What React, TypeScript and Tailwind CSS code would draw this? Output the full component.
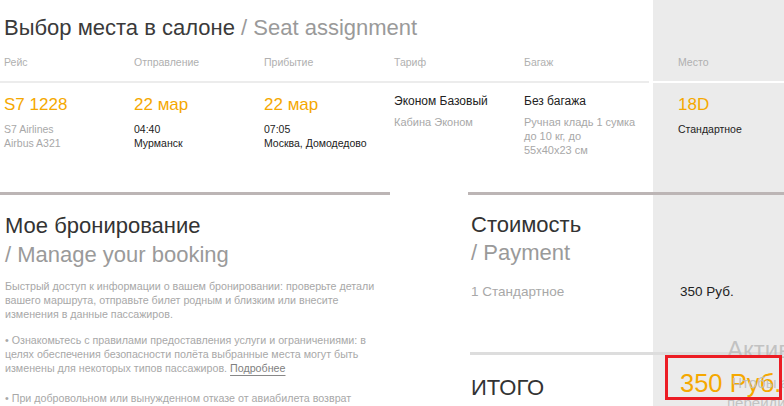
import React from "react";

const font = { fontFamily: '"Liberation Sans", Arial, sans-serif' };

export default function App() {
  return (
    <div
      className="relative w-[784px] h-[406px] overflow-hidden bg-[linear-gradient(to_right,#ffffff_653px,#ebebeb_653px)] text-[#333]"
      style={font}
    >
      {/* Header */}
      <div className="pl-[4px] pt-[14px] h-[50px] text-[22px] leading-[28px] whitespace-nowrap">
        <span className="text-[#3a3a3a]">Выбор места в салоне</span>
        <span className="text-[#9a9a9a]"> / Seat assignment</span>
      </div>

      {/* Flight table */}
      <div className="h-[107px]">
        <div className="grid grid-cols-[134px_130px_130px_130px_125px_1fr] grid-rows-[31px_2px_auto]">
          <div className="pl-[4px] text-[10.5px] leading-[12px] text-[#b0b0b0] pt-[6px]">Рейс</div>
          <div className="text-[10.5px] leading-[12px] text-[#b0b0b0] pt-[6px]">Отправление</div>
          <div className="text-[10.5px] leading-[12px] text-[#b0b0b0] pt-[6px]">Прибытие</div>
          <div className="text-[10.5px] leading-[12px] text-[#b0b0b0] pt-[6px]">Тариф</div>
          <div className="text-[10.5px] leading-[12px] text-[#b0b0b0] pt-[6px]">Багаж</div>
          <div className="pl-[29px] text-[10.5px] leading-[12px] text-[#b0b0b0] pt-[6px]">Место</div>

          <div className="col-span-5 h-[2px] bg-[#ececec]" />
          <div className="h-[2px] bg-white" />

          <div className="pl-[4px] pt-[12px]">
            <div className="text-[17px] leading-[20px] text-[#f5a800]">S7 1228</div>
            <div className="mt-[7px] text-[10.5px] leading-[14px] text-[#a8a8a8]">S7 Airlines</div>
            <div className="text-[10.5px] leading-[14px] text-[#a8a8a8]">Airbus A321</div>
          </div>
          <div className="pt-[12px]">
            <div className="text-[17px] leading-[20px] text-[#f5a800]">22 мар</div>
            <div className="mt-[7px] text-[10.5px] leading-[14px] text-[#222]">04:40</div>
            <div className="text-[10.5px] leading-[14px] text-[#222]">Мурманск</div>
          </div>
          <div className="pt-[12px]">
            <div className="text-[17px] leading-[20px] text-[#f5a800]">22 мар</div>
            <div className="mt-[7px] text-[10.5px] leading-[14px] text-[#222]">07:05</div>
            <div className="text-[10.5px] leading-[14px] text-[#222] whitespace-nowrap">Москва, Домодедово</div>
          </div>
          <div className="pt-[11px]">
            <div className="text-[12px] leading-[15px] text-[#222] whitespace-nowrap">Эконом Базовый</div>
            <div className="mt-[6px] text-[11px] leading-[14px] text-[#a8a8a8]">Кабина Эконом</div>
          </div>
          <div className="pt-[11px]">
            <div className="text-[12px] leading-[15px] text-[#222]">Без багажа</div>
            <div className="mt-[6px] text-[11px] leading-[14px] text-[#a8a8a8] whitespace-nowrap">
              <div>Ручная кладь 1 сумка</div>
              <div>до 10 кг, до</div>
              <div>55x40x23 см</div>
            </div>
          </div>
          <div className="pl-[29px] pt-[12px]">
            <div className="text-[17px] leading-[20px] text-[#f5a800]">18D</div>
            <div className="mt-[7px] text-[10.5px] leading-[14px] text-[#222]">Стандартное</div>
          </div>
        </div>
      </div>

      {/* Lower sections */}
      <div className="mt-[35px] flex">
        <div className="w-[390px]">
          <div className="h-[3px] bg-[#bcb5b5]" />
          <div className="pl-[5px] pt-[16px]">
            <div className="text-[22px] leading-[29px] text-[#333] whitespace-nowrap">Мое бронирование</div>
            <div className="text-[22px] leading-[29px] text-[#9a9a9a] whitespace-nowrap">/ Manage your booking</div>
            <div className="mt-[10px] text-[10.7px] leading-[14px] text-[#a8a8a8] whitespace-nowrap">
              Быстрый доступ к информации о вашем бронировании: проверьте детали
              <br />
              вашего маршрута, отправьте билет родным и близким или внесите
              <br />
              изменения в данные пассажиров.
            </div>
            <div className="mt-[12px] text-[10.7px] leading-[14px] text-[#a8a8a8] whitespace-nowrap">
              • Ознакомьтесь с правилами предоставления услуги и ограничениями: в
              <br />
              целях обеспечения безопасности полёта выбранные места могут быть
              <br />
              изменены для некоторых типов пассажиров.{" "}
              <span className="text-[#808080] underline underline-offset-[3px] decoration-[#888]">Подробнее</span>
            </div>
            <div className="mt-[16px] text-[10.7px] leading-[14px] text-[#a8a8a8] whitespace-nowrap">
              • При добровольном или вынужденном отказе от авиабилета возврат
            </div>
          </div>
        </div>

        <div className="ml-[78px] flex-1">
          <div className="h-[3px] bg-[#bcb5b5]" />
          <div className="pl-[3px] pt-[16px]">
            <div className="text-[22px] leading-[28px] text-[#333] whitespace-nowrap">Стоимость</div>
            <div className="text-[22px] leading-[28px] text-[#9a9a9a] whitespace-nowrap">/ Payment</div>
            <div className="mt-[17px] flex text-[13.5px] leading-[16px]">
              <div className="w-[209px] text-[#a8a8a8]">1 Стандартное</div>
              <div className="text-[#222]">350 Руб.</div>
            </div>
          </div>
          <div className="mt-[52px] ml-[2px] h-[3px] bg-[#dddddd]" />
          <div className="flex items-start pl-[3px]">
            <div className="w-[209px] pt-[19px] text-[22px] leading-[28px] text-[#333]">ИТОГО</div>
            <div className="pt-[13px] text-[25.5px] leading-[30px] text-[#f5a800] whitespace-nowrap">
              350 Руб.
            </div>
          </div>
        </div>
      </div>

      {/* Windows activation watermark */}
      <div className="absolute left-[727px] top-[336px] text-[#bdbdbd]/90 whitespace-nowrap pointer-events-none">
        <div className="text-[24px] leading-[28px]">Активация Windows</div>
        <div className="mt-[9px] pl-[5px] text-[15px] leading-[20px]">Чтобы активировать Windows,</div>
        <div className="text-[15px] leading-[20px]">перейдите в раздел "Параметры".</div>
      </div>

      {/* Red annotation box */}
      <div className="absolute left-[665px] top-[355px] w-[117px] h-[45px] border-[3px] border-[#ec1c24] pointer-events-none" />
    </div>
  );
}
